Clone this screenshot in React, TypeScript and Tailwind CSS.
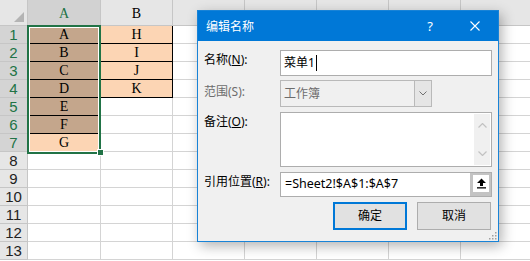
import React from 'react';

type CellDef = { text?: string; bg?: string; br?: boolean; bb?: boolean };

const colHeads = [
  { key: 'A', w: 'w-[73px]', sel: true },
  { key: 'B', w: 'w-[72px]', sel: false },
  { key: '', w: 'w-[72px]', sel: false },
  { key: '', w: 'w-[72px]', sel: false },
  { key: '', w: 'w-[72px]', sel: false },
  { key: '', w: 'w-[72px]', sel: false },
  { key: '', w: 'w-[72px]', sel: false },
];

const colA: CellDef[] = [
  { text: 'A', bg: 'bg-[#c4a68c]', bb: true },
  { text: 'B', bg: 'bg-[#c4a68c]', bb: true },
  { text: 'C', bg: 'bg-[#c4a68c]', bb: true },
  { text: 'D', bg: 'bg-[#c4a68c]', bb: true },
  { text: 'E', bg: 'bg-[#c4a68c]', bb: true },
  { text: 'F', bg: 'bg-[#c4a68c]', bb: true },
  { text: 'G', bg: 'bg-[#fcd5b4]' },
];

const colB: CellDef[] = [
  { text: 'H', bg: 'bg-[#fcd5b4]', br: true, bb: true },
  { text: 'I', bg: 'bg-[#fcd5b4]', br: true, bb: true },
  { text: 'J', bg: 'bg-[#fcd5b4]', br: true, bb: true },
  { text: 'K', bg: 'bg-[#fcd5b4]', br: true, bb: true },
];

const rows = Array.from({ length: 13 }, (_, i) => i + 1);

const Cell: React.FC<{ w: string; def?: CellDef }> = ({ w, def }) => (
  <div
    className={`${w} h-[18px] shrink-0 border-r border-b flex items-center justify-center text-[14px] leading-none text-black ${
      def?.bg || 'bg-white'
    } ${def?.br ? 'border-r-black' : 'border-r-[#d4d4d4]'} ${def?.bb ? 'border-b-black' : 'border-b-[#d4d4d4]'}`}
  >
    {def?.text}
  </div>
);

const Label: React.FC<{ children: React.ReactNode; pt: string; gray?: boolean }> = ({ children, pt, gray }) => (
  <div className={`w-[76px] shrink-0 text-[12px] leading-[14px] ${pt} ${gray ? 'text-[#6d6d6d]' : 'text-black'}`}>
    {children}
  </div>
);

const App: React.FC = () => {
  return (
    <div className="relative w-[530px] h-[261px] overflow-hidden bg-white font-['Liberation_Serif',serif]">
      {/* column headers */}
      <div className="flex h-[26px]">
        <div className="w-[28px] shrink-0 bg-[#e6e6e6] border-r border-b border-[#c6c6c6] relative">
          <svg className="absolute left-0 top-0" width="28" height="26">
            <polygon points="14,22 24,12 24,22" fill="#b4b4b4" />
          </svg>
        </div>
        {colHeads.map((c, i) => (
          <div
            key={i}
            className={`${c.w} shrink-0 border-r border-b border-[#c6c6c6] flex items-end justify-center pb-[4px] text-[14px] leading-none ${
              c.sel ? 'bg-[#d2d2d2] text-[#217346]' : 'bg-[#e6e6e6] text-black'
            }`}
          >
            {c.key}
          </div>
        ))}
      </div>

      {/* rows */}
      {rows.map((r) => (
        <div key={r} className="flex h-[18px]">
          <div
            className={`w-[28px] shrink-0 h-[18px] border-r border-b border-[#c6c6c6] flex items-center justify-center text-[15px] leading-none font-['Liberation_Sans',sans-serif] ${
              r <= 7 ? 'bg-[#d4d4d4] text-[#217346]' : 'bg-[#e6e6e6] text-[#222]'
            }`}
          >
            {r}
          </div>
          <Cell w="w-[73px]" def={colA[r - 1]} />
          <Cell w="w-[72px]" def={colB[r - 1]} />
          <Cell w="w-[72px]" />
          <Cell w="w-[72px]" />
          <Cell w="w-[72px]" />
          <Cell w="w-[72px]" />
          <Cell w="w-[72px]" />
        </div>
      ))}

      {/* selection */}
      <div className="absolute left-[27px] top-[25px] w-[74px] h-[129px] border-2 border-[#217346] shadow-[inset_0_0_0_1px_#ffffff]" />
      <div className="absolute left-[97px] top-[149px] w-[7px] h-[7px] bg-[#217346] border border-white" />

      {/* dialog */}
      <div className="absolute left-[197px] top-[10px] w-[302px] h-[232px] border border-[#1883d7] bg-[#f0f0f0] shadow-[3px_4px_12px_rgba(0,0,0,0.3)] flex flex-col font-['Noto_Sans','Noto_Sans_CJK_SC',sans-serif]">
        <div className="h-[30px] shrink-0 bg-[#0078d7] flex items-center text-white pl-[8px] pr-[18px]">
          <span className="text-[12px] leading-none font-['Noto_Sans_CJK_SC',sans-serif]">编辑名称</span>
          <span className="flex-1" />
          <span className="text-[13px] leading-none mr-[37px]">?</span>
          <svg width="10" height="10" viewBox="0 0 10 10">
            <path d="M0.5 0.5 L9.5 9.5 M9.5 0.5 L0.5 9.5" stroke="#fff" strokeWidth="1.1" />
          </svg>
        </div>

        <div className="flex-1 flex flex-col px-[6px] pt-[9px] relative">
          {/* name */}
          <div className="flex">
            <Label pt="pt-[3px]">
              名称(<span className="underline">N</span>):
            </Label>
            <div className="w-[212px] h-[26px] bg-white border border-[#adadad] flex items-center pl-[3px] text-[12px] text-black">
              菜单1<span className="inline-block w-px h-[16px] bg-black ml-[1px]" />
            </div>
          </div>

          {/* scope */}
          <div className="flex mt-[4px]">
            <Label pt="pt-[5px]" gray>
              范围(S):
            </Label>
            <div className="w-[152px] h-[27px] bg-[#f0f0f0] border border-[#b9b9b9] flex items-stretch">
              <div className="flex-1 flex items-center pl-[3px] text-[12px] text-[#6d6d6d]">工作簿</div>
              <div className="w-[17px] bg-[#e5e5e5] border-l border-[#b9b9b9] flex items-center justify-center">
                <svg width="8" height="5" viewBox="0 0 8 5">
                  <path d="M0.5 0.5 L4 4 L7.5 0.5" stroke="#707070" fill="none" strokeWidth="1" />
                </svg>
              </div>
            </div>
          </div>

          {/* comment */}
          <div className="flex mt-[5px]">
            <Label pt="pt-[3px]">
              备注(<span className="underline">O</span>):
            </Label>
            <div className="w-[212px] h-[55px] bg-white border border-[#adadad] flex justify-end p-px">
              <div className="w-[16px] bg-[#f0f0f0] flex flex-col items-center justify-between py-[9px]">
                <svg width="9" height="5" viewBox="0 0 9 5">
                  <path d="M0.5 4.5 L4.5 0.5 L8.5 4.5" stroke="#c2c2c2" fill="none" strokeWidth="1.2" />
                </svg>
                <svg width="9" height="5" viewBox="0 0 9 5">
                  <path d="M0.5 0.5 L4.5 4.5 L8.5 0.5" stroke="#c2c2c2" fill="none" strokeWidth="1.2" />
                </svg>
              </div>
            </div>
          </div>

          {/* refers to */}
          <div className="flex mt-[5px]">
            <Label pt="pt-[3px]">
              引用位置(<span className="underline">R</span>):
            </Label>
            <div className="w-[212px] h-[25px] bg-white border border-[#adadad] flex items-stretch">
              <div className="flex-1 flex items-center pl-[4px] text-[12.5px] text-black">=Sheet2!$A$1:$A$7</div>
              <div className="w-[21px] bg-[#c3c3c3] pl-[3px] pr-[2px] pt-[2px] pb-[4px] flex">
                <div className="flex-1 bg-white flex items-center justify-center">
                  <svg width="11" height="11" viewBox="0 0 11 11">
                    <path d="M5.5 0.5 L10 5 L7 5 L7 8 L4 8 L4 5 L1 5 Z" fill="#000" />
                    <rect x="1" y="9.2" width="9" height="1.3" fill="#000" />
                  </svg>
                </div>
              </div>
            </div>
          </div>

          {/* buttons */}
          <div className="flex justify-end gap-[10px] mt-[5px] pr-[1px]">
            <button className="w-[74px] h-[28px] bg-[#e1e1e1] border-2 border-[#0078d7] text-[12px] text-black">
              确定
            </button>
            <button className="w-[74px] h-[28px] bg-[#e1e1e1] border border-[#adadad] text-[12px] text-black">
              取消
            </button>
          </div>

          <svg className="absolute right-[1px] bottom-[1px]" width="10" height="10" viewBox="0 0 10 10">
            <rect x="8" y="2" width="1.5" height="1.5" fill="#a0a0a0" />
            <rect x="5" y="5" width="1.5" height="1.5" fill="#a0a0a0" />
            <rect x="8" y="5" width="1.5" height="1.5" fill="#a0a0a0" />
            <rect x="2" y="8" width="1.5" height="1.5" fill="#a0a0a0" />
            <rect x="5" y="8" width="1.5" height="1.5" fill="#a0a0a0" />
            <rect x="8" y="8" width="1.5" height="1.5" fill="#a0a0a0" />
          </svg>
        </div>
      </div>
    </div>
  );
};

export default App;
